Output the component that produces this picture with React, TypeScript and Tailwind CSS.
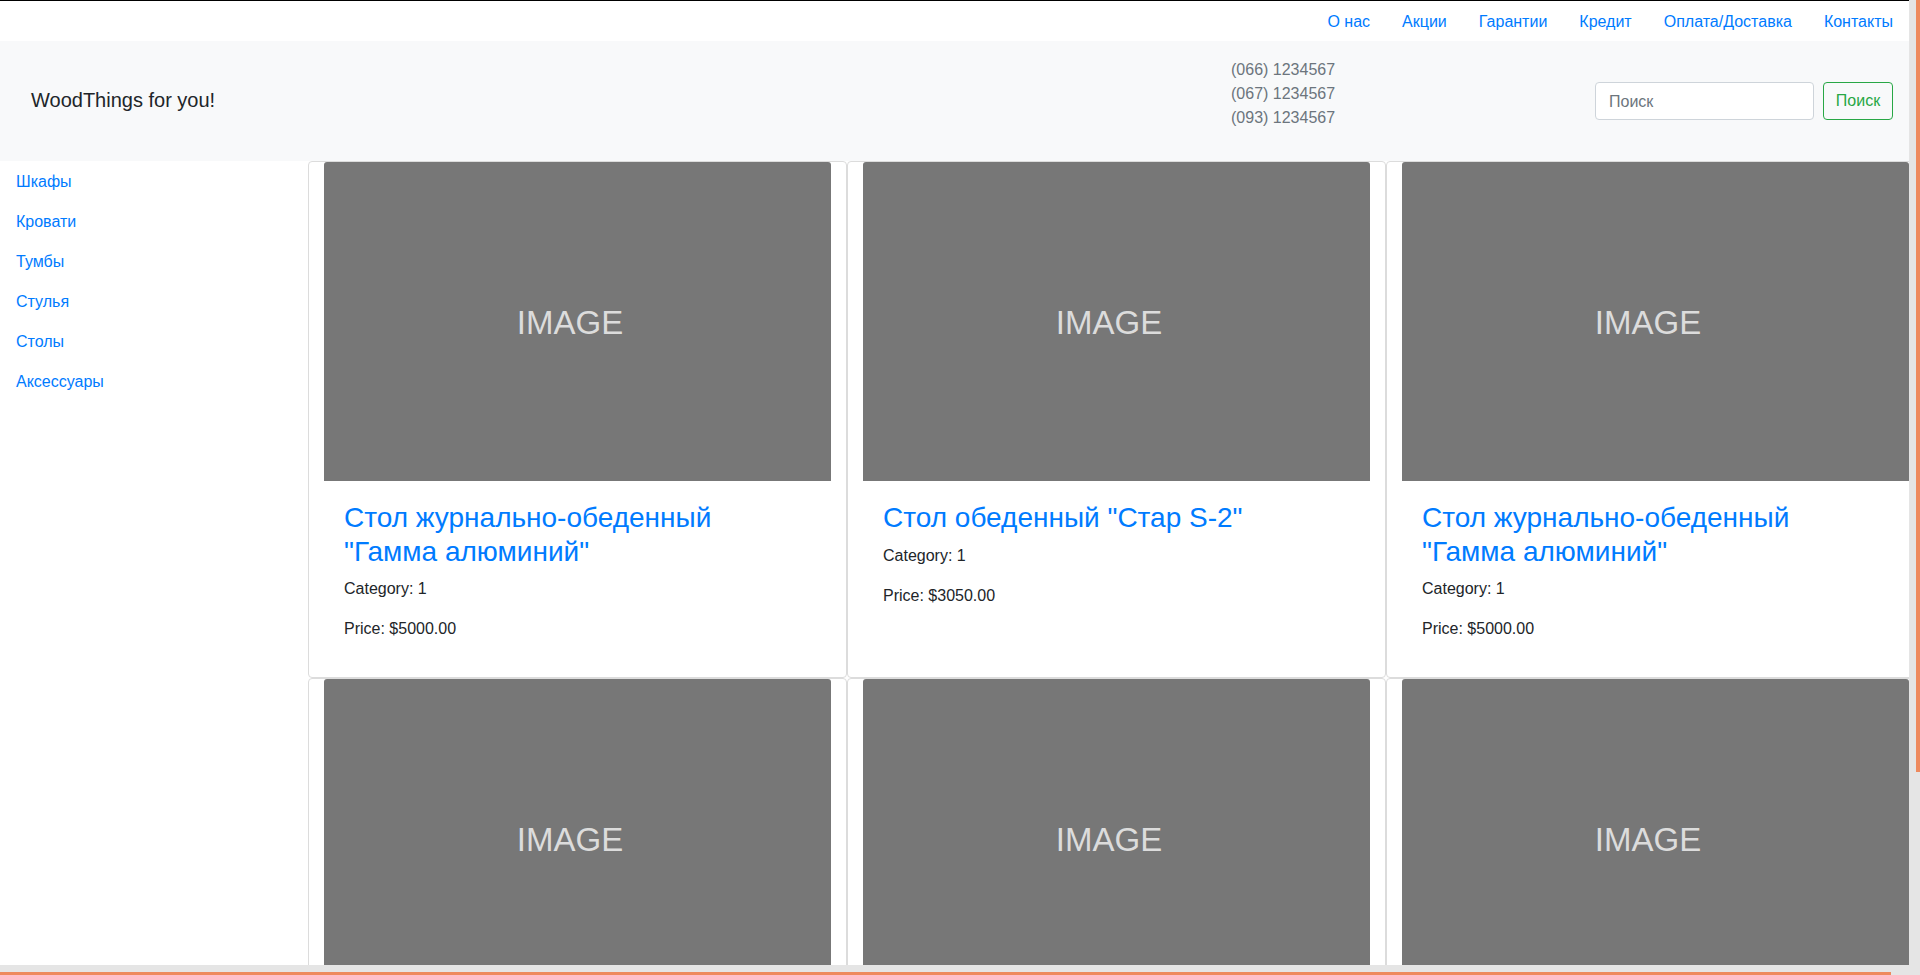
import React from "react";

const navLinks = ["О нас", "Акции", "Гарантии", "Кредит", "Оплата/Доставка", "Контакты"];
const cats = ["Шкафы", "Кровати", "Тумбы", "Стулья", "Столы", "Аксессуары"];

type Product = { title: React.ReactNode; price: string } | null;

const products: Product[] = [
  { title: (<>Стол журнально-обеденный<br />"Гамма алюминий"</>), price: "$5000.00" },
  { title: 'Стол обеденный "Стар S-2"', price: "$3050.00" },
  { title: (<>Стол журнально-обеденный<br />"Гамма алюминий"</>), price: "$5000.00" },
  null,
  null,
  null,
];

function Card({ p }: { p: Product }) {
  return (
    <div className="border border-[#dcdcdc] rounded-[4px] px-[15px] flex flex-col">
      <div className="h-[319px] bg-[#777777] rounded-t-[3px] flex items-center justify-center pr-[15px] pt-[2px]">
        <span className="text-[33px] text-[#dcdcdc] leading-none">IMAGE</span>
      </div>
      {p && (
        <div className="p-5 flex-1">
          <h3 className="text-[28px] leading-[1.2] text-[#007bff] mb-[9px] font-normal">{p.title}</h3>
          <p className="text-[16px] leading-6 text-[#212529] mb-4">Category: 1</p>
          <p className="text-[16px] leading-6 text-[#212529] mb-4">Price: {p.price}</p>
        </div>
      )}
    </div>
  );
}

export default function App() {
  return (
    <div
      className="w-[1920px] h-[975px] overflow-hidden flex flex-col bg-white"
      style={{ fontFamily: '"Liberation Sans", Arial, sans-serif' }}
    >
      <div className="flex h-[965px]">
        <div className="w-[1909px] h-[965px] overflow-hidden border-t border-black shrink-0">
          <nav className="h-[40px] flex justify-end items-center pt-[2px]">
            {navLinks.map((l) => (
              <a key={l} className="px-4 text-[16px] leading-6 text-[#007bff]">
                {l}
              </a>
            ))}
          </nav>
          <header className="h-[120px] bg-[#f8f9fa] flex items-center">
            <div className="w-[1231px] shrink-0 pl-[31px] pb-[2px] text-[20px] text-[#212529] leading-[30px]">
              WoodThings for you!
            </div>
            <div className="mb-[14px] text-[16px] leading-6 text-[#6c757d]">
              <div>(066) 1234567</div>
              <div>(067) 1234567</div>
              <div>(093) 1234567</div>
            </div>
            <div className="ml-auto pr-4 flex items-center">
              <div className="w-[219px] h-[38px] bg-white border border-[#ced4da] rounded-[4px] px-[13px] pt-[2px] flex items-center text-[16px] text-[#6c757d]">
                Поиск
              </div>
              <div className="ml-[9px] w-[70px] h-[38px] border border-[#28a745] rounded-[4px] flex items-center justify-center text-[16px] text-[#28a745]">
                Поиск
              </div>
            </div>
          </header>
          <div className="flex">
            <aside className="w-[308px] shrink-0 pt-px">
              {cats.map((c) => (
                <a key={c} className="block px-4 py-2 text-[16px] leading-6 text-[#007bff]">
                  {c}
                </a>
              ))}
            </aside>
            <div className="grid grid-cols-[539px_539px_539px] shrink-0">
              {products.map((p, i) => (
                <Card key={i} p={p} />
              ))}
            </div>
          </div>
        </div>
        <div className="w-[11px] h-[965px] bg-[#e5e5e5] relative shrink-0">
          <div className="absolute right-0 top-0 w-[4px] h-[772px] bg-[#ee8a5e]" />
        </div>
      </div>
      <div className="h-[10px] bg-[#e5e5e5] relative">
        <div className="absolute left-0 bottom-0 h-[3px] w-[1891px] bg-[#ee8a5e]" />
      </div>
    </div>
  );
}
